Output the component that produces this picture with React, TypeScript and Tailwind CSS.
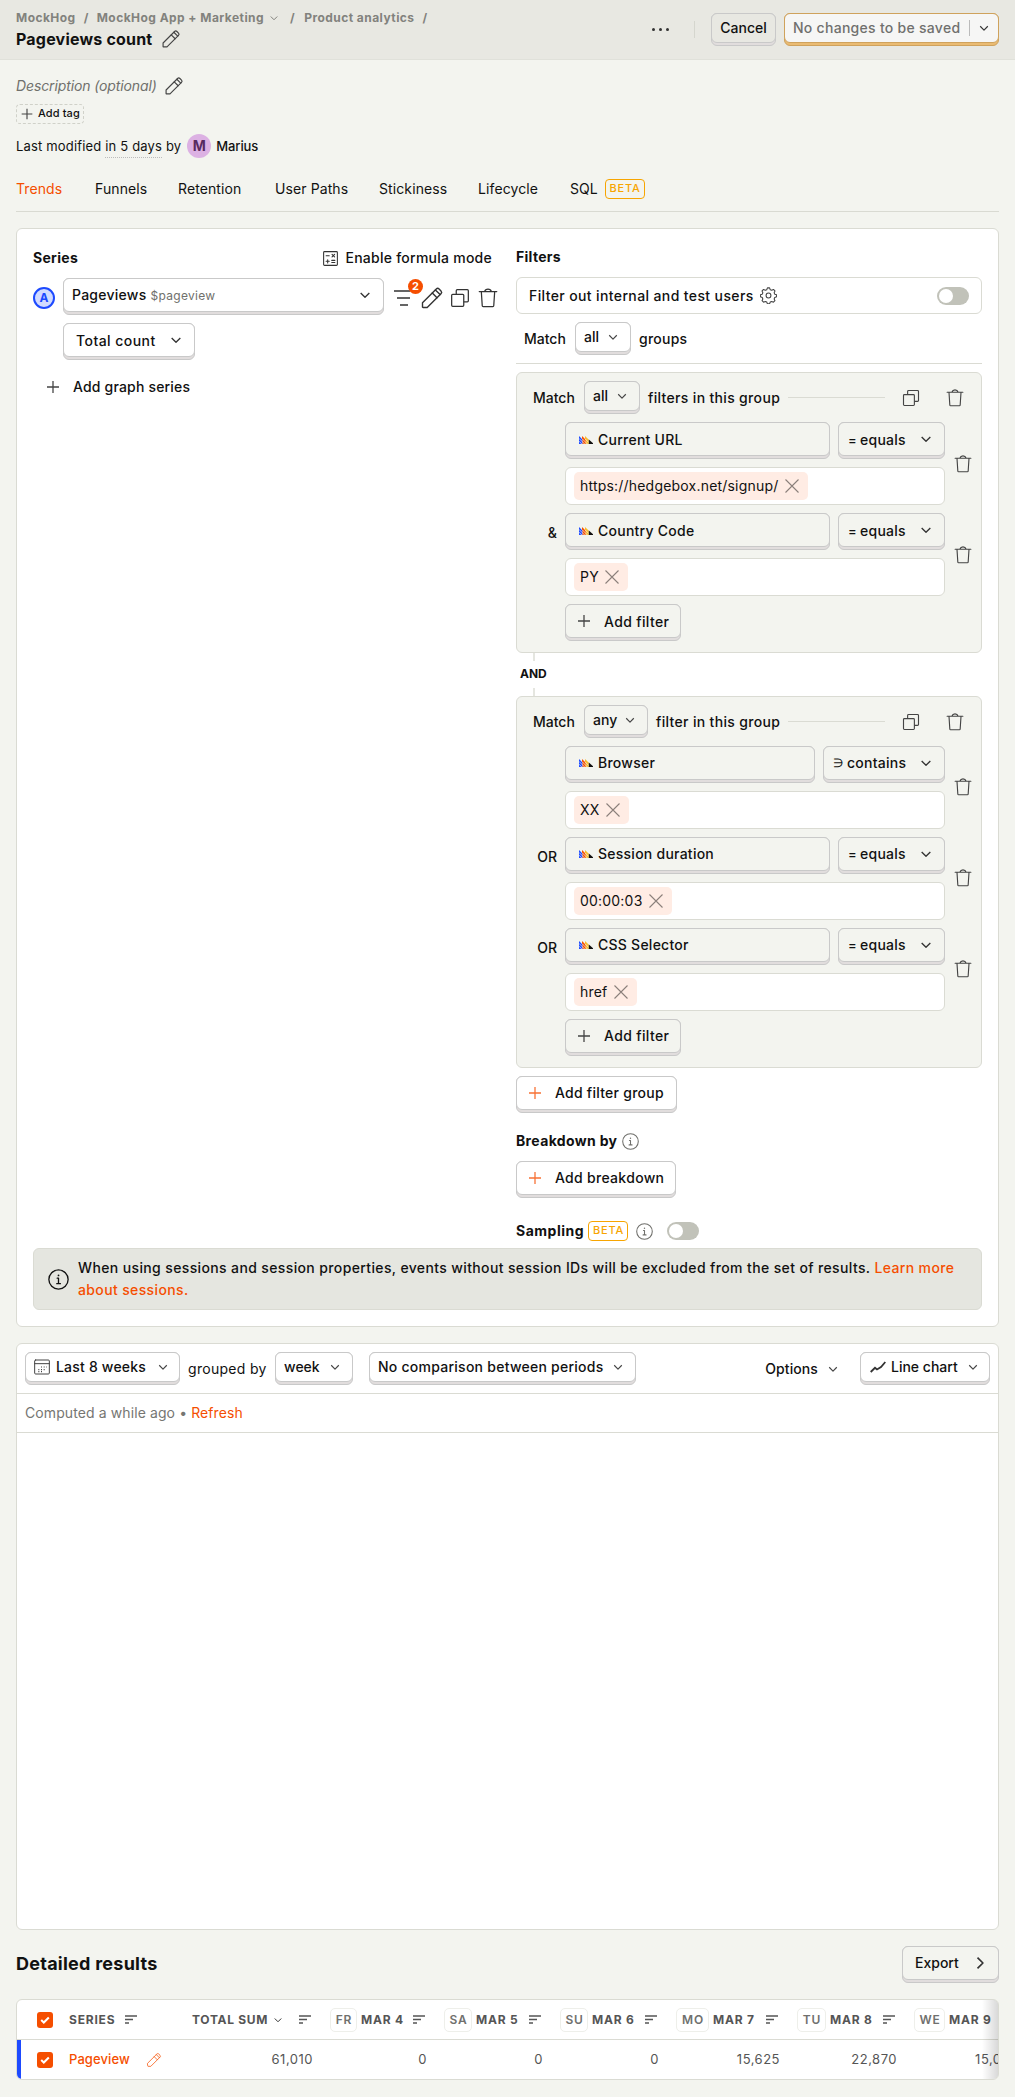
import React from "react";
import clsx from "clsx";

type IconProps = { className?: string };

const svgProps = {
  viewBox: "0 0 24 24",
  fill: "none",
  stroke: "currentColor",
  strokeWidth: 1.5,
  strokeLinecap: "round" as const,
  strokeLinejoin: "round" as const,
};

function Pencil({ className }: IconProps) {
  return (
    <svg {...svgProps} strokeWidth={1.4} className={clsx("shrink-0", className)}>
      <path d="M2.500 16.800 16.300 3a2 2 0 0 1 2.800 0l1.900 1.900a2 2 0 0 1 0 2.800L7.200 21.500H3.100a.6.6 0 0 1-.6-.6z" />
      <path d="m12.300 7 4.700 4.700M15.400 3.900l4.700 4.700" />
    </svg>
  );
}

function Plus({ className }: IconProps) {
  return (
    <svg {...svgProps} strokeWidth={1.7} className={clsx("shrink-0", className)}>
      <path d="M12 4v16M4 12h16" strokeLinecap="butt" />
    </svg>
  );
}

function Chevron({ className }: IconProps) {
  return (
    <svg {...svgProps} strokeWidth={2} className={clsx("shrink-0", className)}>
      <path d="m5.500 9 6.500 6.500L18.500 9" strokeLinecap="butt" />
    </svg>
  );
}

function Copy({ className }: IconProps) {
  return (
    <svg {...svgProps} className={clsx("shrink-0", className)}>
      <rect x="2" y="7.5" width="14.5" height="14.5" rx="1.2" />
      <path d="M7.5 7V3.2c0-.7.5-1.2 1.2-1.2h12.1c.7 0 1.2.5 1.2 1.2v12.1c0 .7-.5 1.2-1.2 1.2H17" />
    </svg>
  );
}

function Trash({ className }: IconProps) {
  return (
    <svg {...svgProps} className={clsx("shrink-0", className)}>
      <path d="M1.500 4.300h21M4 4.500l1.100 16.900c0 .6.5 1 1.100 1h11.600c.6 0 1.100-.4 1.100-1L20 4.500M8 4c.5-1.800 2-2.800 4-2.800s3.500 1 4 2.800" />
    </svg>
  );
}

function Info({ className }: IconProps) {
  return (
    <svg {...svgProps} className={clsx("shrink-0", className)}>
      <circle cx="12" cy="12" r="11" />
      <path d="M10.500 10.500H12v6M10 16.800h4.200" />
      <circle cx="12" cy="7.300" r="1" fill="currentColor" stroke="none" />
    </svg>
  );
}

function Gear({ className }: IconProps) {
  return (
    <svg {...svgProps} className={clsx("shrink-0", className)}>
      <circle cx="12" cy="12" r="3.4" />
      <path d="M10.500 1.200h3l1 2.600 2 .8 2.500-1.100 2.100 2.100-1.100 2.500.8 2 2.600 1v2.800l-2.600 1-.8 2 1.100 2.500-2.100 2.100-2.500-1.100-2 .8-1 2.600h-3l-1-2.600-2-.8-2.500 1.100-2.100-2.100 1.100-2.500-.8-2-2.600-1v-2.800l2.600-1 .8-2-1.100-2.500 2.100-2.100 2.500 1.100 2-.8z" />
    </svg>
  );
}

function Calculator({ className }: IconProps) {
  return (
    <svg {...svgProps} strokeWidth={1.7} className={clsx("shrink-0", className)}>
      <rect x="1" y="1" width="22" height="22" rx="1.500" />
      <path d="M5 7.500h5M14.500 5.500l4 4M18.500 5.500l-4 4M5 16.500h5M7.500 14v5M14 15h5M14 18.500h5" />
    </svg>
  );
}

function Calendar({ className }: IconProps) {
  return (
    <svg {...svgProps} className={clsx("shrink-0", className)}>
      <rect x="1" y="1.500" width="22" height="21" rx="1.500" />
      <path d="M1 7h22" />
      <path d="M10.500 12h1.500M14.500 12H16M18 12h1M6.500 16H8M10.500 16h1.500M14.500 16H16M6.500 19H8M10.500 19h1.500" strokeWidth={1.8} strokeLinecap="butt" />
    </svg>
  );
}

function Sort({ className }: IconProps) {
  return (
    <svg viewBox="0 0 12 9" className={clsx("h-[9px] w-3 shrink-0", className)} stroke="currentColor" strokeWidth={1.3}>
      <path d="M0 1h12M0 4.500h8M0 8h4" />
    </svg>
  );
}

function Logo() {
  return (
    <svg viewBox="0 0 14 8" className="h-2 w-3.5 shrink-0">
      <path d="M0 0 3.500 3.500V8H0z" fill="#1d4aff" />
      <path d="M3 0 6.800 3.800V8H3.500V3.500L3 3z" fill="#f54e00" />
      <path d="M6 0l3.800 3.800V8H6.800V3.800L6 3z" fill="#f9bd2b" />
      <path d="M0 2.400 5.600 8M0 5.200 2.800 8M3 2.600 8.400 8M6 2.800l3.800 3.800" stroke="#f3f4ef" strokeWidth={0.7} />
      <path d="m9.800 3.400 4.200 3.900V8H9.800z" fill="#111" />
    </svg>
  );
}

type BtnProps = {
  children: React.ReactNode;
  className?: string;
  face?: string;
  edge?: string;
  small?: boolean;
};

function Btn({ children, className, face = "bg-white border-[#c9c9c9]", edge = "bg-[#e1dddd] border-[#c9c9c9]", small }: BtnProps) {
  return (
    <button type="button" className={clsx("flex shrink-0 rounded-[6px] border pb-[2px]", small ? "h-[33px]" : "h-[37px]", edge, className)}>
      <span className={clsx("-mx-px -mt-px flex flex-1 items-center rounded-[6px] border font-medium whitespace-nowrap", small ? "h-[30px]" : "h-[34px]", face)}>
        {children}
      </span>
    </button>
  );
}

const gray = "bg-[#f3f4ef] border-[#c9c9c9]";

function Select({ label, className, face }: { label: string; className: string; face?: string }) {
  return (
    <Btn small className={className} face={face}>
      <span className="flex-1 pl-2 text-left">{label}</span>
      <Chevron className="mr-2.5 size-3.5 text-[#444]" />
    </Btn>
  );
}

function Toggle() {
  return (
    <span className="flex h-[18px] w-8 shrink-0 items-center rounded-full bg-[#c1c2b9] pl-[2px]">
      <span className="size-3.5 rounded-full bg-white" />
    </span>
  );
}

function Beta() {
  return (
    <span className="flex h-5 w-10 shrink-0 items-center justify-center rounded-[4px] border border-[#f7a501] pl-px text-[11px] font-medium tracking-[0.8px] text-[#f7a501]">
      BETA
    </span>
  );
}

type Prop = { name: string; value: string; op?: string; join?: string };

function FilterRow({ name, value, op = "equals", join, textClass }: Prop & { textClass?: string }) {
  const contains = op === "contains";
  return (
    <div className="flex h-[83px]">
      <div className="w-10 pt-[10px] text-right font-medium leading-[20px]">{join}</div>
      <div className="ml-2 flex w-[380px] flex-col gap-2">
        <div className="flex gap-2">
          <Btn className="flex-1" face={gray}>
            <span className={clsx("flex items-center gap-[5px] pl-[13px] tracking-[0.25px]", textClass)}>
              <Logo />
              {name}
            </span>
          </Btn>
          <Btn className={contains ? "w-[122px]" : "w-[107px]"} face={gray}>
            <span className={clsx("flex flex-1 items-center gap-1 pl-[9px] tracking-[0.25px]", textClass)}>
              <span className={contains ? "w-[10px] text-[12px] font-normal tracking-normal" : "w-[8px] text-[13px] tracking-normal"}>{contains ? "∋" : "="}</span>
              {op}
            </span>
            <Chevron className="mr-2.5 size-4 text-[#333]" />
          </Btn>
        </div>
        <div className="flex h-[38px] items-center rounded-[6px] border border-[#dadbd3] bg-white pl-2">
          <span className="flex h-7 items-center gap-[6.500px] rounded-[5px] bg-[#ffece4] pr-[9px] pl-1.5">
            <span className="tracking-[0.2px]">{value}</span>
            <svg viewBox="0 0 14 14" className="size-3.5" stroke="#8b7f7a" strokeWidth={1.1}>
              <path d="m.5.5 13 13M13.500.5l-13 13" />
            </svg>
          </span>
        </div>
      </div>
      <Trash className={clsx("mt-[32px] ml-[9px] size-[18px] text-[#444]", textClass)} />
    </div>
  );
}

type GroupProps = { match: string; text: string; rows: Prop[]; matchWidth: string; textClass?: string };

function FilterGroup({ match, text, rows, matchWidth, textClass }: GroupProps) {
  return (
    <div className="flex flex-col rounded-[6px] border border-[#dadbd3] bg-[#f3f4ef] pt-2 pb-[11px]">
      <div className="flex h-[33px] items-center pl-4 font-medium">
        <span className="w-[51px]">Match</span>
        <Select label={match} className={matchWidth} face={gray} />
        <span className="ml-2 whitespace-nowrap tracking-[0.33px]">{text}</span>
        <span className="ml-2 h-px flex-1 bg-[#dadbd3]" />
        <Copy className="ml-[17px] size-[18px] text-[#444]" />
        <Trash className="mr-[17px] ml-[26px] size-[18px] text-[#444]" />
      </div>
      <div className="mt-2 flex flex-col gap-2">
        {rows.map((r) => (
          <FilterRow key={r.name} {...r} textClass={textClass} />
        ))}
      </div>
      <Btn className="mt-2 ml-12 w-[116px]" face={gray}>
        <Plus className="ml-[9px] size-[18px] text-[#444]" />
        <span className={clsx("ml-[11px] tracking-[0.35px]", textClass)}>Add filter</span>
      </Btn>
    </div>
  );
}

function Check() {
  return (
    <span className="flex size-4 shrink-0 items-center justify-center rounded-[3px] bg-[#f54e00]">
      <svg viewBox="0 0 16 16" className="size-4" fill="none" stroke="#fff" strokeWidth={2}>
        <path d="m4.200 8 2.600 2.500 5-5" />
      </svg>
    </span>
  );
}

const days = [
  { d: "FR", m: "MAR 4", v: "0", w: "w-[114px]", b: "w-[27px]" },
  { d: "SA", m: "MAR 5", v: "0", w: "w-[116px]", b: "w-[28px]" },
  { d: "SU", m: "MAR 6", v: "0", w: "w-[116px]", b: "w-[28px]" },
  { d: "MO", m: "MAR 7", v: "15,625", w: "w-[121px]", b: "w-[33px]" },
  { d: "TU", m: "MAR 8", v: "22,870", w: "w-[117px]", b: "w-[29px]" },
  { d: "WE", m: "MAR 9", v: "15,041", w: "w-[119px]", b: "w-[31px]" },
];

const tabs = [
  { name: "Trends", w: "w-[79px]" },
  { name: "Funnels", w: "w-[83px]" },
  { name: "Retention", w: "w-[97px]" },
  { name: "User Paths", w: "w-[104px]" },
  { name: "Stickiness", w: "w-[99px]" },
  { name: "Lifecycle", w: "w-[92px]" },
];

export default function App() {
  return (
    <div className="h-[2097px] w-[1015px] overflow-hidden bg-[#f3f4ef] font-['Inter',sans-serif] text-sm text-[#111]">
      <header className="flex h-[60px] border-b border-[#e0e1da] bg-[#e8e8e2] pl-4">
        <div className="flex-1 pt-[10px]">
          <div className="flex h-4 items-center text-xs font-bold tracking-[0.45px] text-[#82827d]">
            <span>MockHog</span>
            <span className="mx-[8px]">/</span>
            <span>MockHog App + Marketing</span>
            <Chevron className="ml-1 size-3" />
            <span className="mr-[9px] ml-[10px]">/</span>
            <span>Product analytics</span>
            <span className="mx-[8px]">/</span>
          </div>
          <div className="mt-px flex h-6 items-center">
            <h1 className="text-base font-bold tracking-[0.2px]">Pageviews count</h1>
            <Pencil className="ml-[9px] size-5 text-[#444]" />
          </div>
        </div>
        <div className="flex pt-[13px] pr-4">
          <div className="flex h-[33px] items-center">
            <span className="flex w-[17px] justify-between">
              <i className="size-[3px] rounded-full bg-[#333]" />
              <i className="size-[3px] rounded-full bg-[#333]" />
              <i className="size-[3px] rounded-full bg-[#333]" />
            </span>
            <span className="mr-4 ml-[25px] h-[17px] w-px bg-[#d5d6ce]" />
          </div>
          <Btn small className="w-[65px]" face="bg-[#e8e8e2] border-[#c9c9c9]">
            <span className="flex-1 text-center">Cancel</span>
          </Btn>
          <Btn small className="ml-2 w-[215px]" face="bg-[#f6f6f5] border-[#cfa25c]" edge="bg-[#eabb72] border-[#cfa25c]">
            <span className="flex-1 pl-2 text-left tracking-[0.28px] text-[#70706e]">No changes to be saved</span>
            <span className="h-4 w-px bg-[#bbb]" />
            <Chevron className="mr-[7px] ml-[7px] size-3.5 text-[#333]" />
          </Btn>
        </div>
      </header>

      <main className="flex flex-col px-4">
        <div className="mt-4 flex h-5 items-center text-[#70706c]">
          <span className="tracking-[-0.12px] italic">Description (optional)</span>
          <Pencil className="ml-[7px] size-5 text-[#444]" />
        </div>
        <div className="mt-2 flex h-5 w-[68px] items-center rounded-[4px] border border-dashed border-[#d0d1c9] pl-[2px] text-[11px] font-medium">
          <Plus className="size-4 text-[#444]" />
          <span className="ml-[3px] whitespace-nowrap tracking-[0.1px]">Add tag</span>
        </div>
        <div className="mt-[10px] flex h-6 items-center text-[13px]">
          <span className="tracking-[0.17px]">
            Last modified <span className="border-b border-dotted border-[#bbb] pb-[3px]">in 5 days</span> by
          </span>
          <span className="ml-1.5 flex size-6 items-center justify-center rounded-full bg-[#dcb1e3] text-sm font-bold text-[#572b5f]">M</span>
          <span className="ml-[5px] font-medium tracking-[-0.1px]">Marius</span>
        </div>
        <nav className="mt-[9px] flex h-[45px] items-center border-b border-[#d9dad2]">
          {tabs.map((t, i) => (
            <span key={t.name} className={clsx("tracking-[0.1px]", t.w, i === 0 && "text-[#f54e00]")}>
              {t.name}
            </span>
          ))}
          <span className="flex items-center gap-[7px]">
            SQL <Beta />
          </span>
        </nav>

        <section className="mt-4 flex h-[1099px] flex-col rounded-[6px] border border-[#dadbd3] bg-white px-4">
          <div className="flex h-[1019px] gap-4">
            <div className="flex w-[467px] flex-col">
              <div className="mt-[19px] flex h-5 items-center">
                <h4 className="flex-1 font-bold tracking-[0.3px]">Series</h4>
                <Calculator className="size-[15px] text-[#333]" />
                <span className="mr-2 ml-[7px] font-medium tracking-[0.25px]">Enable formula mode</span>
              </div>
              <div className="mt-[10px] flex items-start">
                <span className="mt-[9px] flex size-[22px] items-center justify-center rounded-full border-2 border-[#1d4aff] bg-[#d2dbff] text-xs font-bold text-[#1d4aff]">A</span>
                <Btn className="ml-2 w-[321px]">
                  <span className="flex-1 pl-2 text-left tracking-[0.25px]">
                    Pageviews <span className="text-xs font-normal tracking-[0.3px] text-[#70706c]">$pageview</span>
                  </span>
                  <Chevron className="mr-2.5 size-4 text-[#333]" />
                </Btn>
                <div className="relative mt-[11px] ml-2 flex h-[18px] items-center text-[#333]">
                  <svg viewBox="0 0 20 18" className="h-[18px] w-5" stroke="currentColor" strokeWidth={1.6}>
                    <path d="M2 2h16M5 9h13M8 16h8" />
                  </svg>
                  <span className="absolute -top-[10px] left-[16px] flex size-[15px] items-center justify-center rounded-full bg-[#f54e00] text-[11px] font-bold text-white">2</span>
                  <Pencil className="ml-[8px] size-[24px]" />
                  <Copy className="ml-[6px] size-[20px]" />
                  <Trash className="ml-[8px] size-5" />
                </div>
              </div>
              <Btn className="mt-2 ml-[30px] w-[132px]">
                <span className="flex-1 pt-px pl-3 text-left tracking-[0.45px]">Total count</span>
                <Chevron className="mr-2.5 size-4 text-[#333]" />
              </Btn>
              <div className="mt-[17px] ml-[11px] flex h-5 items-center font-medium">
                <Plus className="size-[18px] text-[#444]" />
                <span className="ml-[11px] tracking-[0.18px]">Add graph series</span>
              </div>
            </div>

            <div className="flex w-[466px] flex-col">
              <h4 className="mt-[18px] h-5 font-bold leading-5 tracking-[0.3px]">Filters</h4>
              <div className="mt-[10px] flex h-[37px] items-center rounded-[6px] border border-[#dadbd3] px-3">
                <span className="font-medium tracking-[0.38px]">Filter out internal and test users</span>
                <Gear className="ml-[6px] size-[17px] text-[#444]" />
                <span className="flex-1" />
                <Toggle />
              </div>
              <div className="mt-2 flex h-[33px] items-center pl-2 font-medium">
                <span className="w-[51px]">Match</span>
                <Select label="all" className="w-14" />
                <span className="ml-2 tracking-[0.25px]">groups</span>
              </div>
              <div className="mt-2 mb-2 h-px bg-[#dadbd3]" />
              <FilterGroup
                match="all"
                matchWidth="w-14"
                text="filters in this group"
                textClass="translate-y-px"
                rows={[
                  { name: "Current URL", value: "https://hedgebox.net/signup/" },
                  { name: "Country Code", value: "PY", join: "&" },
                ]}
              />
              <div className="flex h-[43px] flex-col">
                <span className="ml-[17px] h-2 w-[2px] bg-[#e5e6e0]" />
                <span className="flex h-[27px] items-center pb-[2px] pl-1 text-xs font-bold">AND</span>
                <span className="ml-[17px] h-2 w-[2px] bg-[#e5e6e0]" />
              </div>
              <FilterGroup
                match="any"
                matchWidth="w-16"
                text="filter in this group"
                rows={[
                  { name: "Browser", value: "XX", op: "contains" },
                  { name: "Session duration", value: "00:00:03", join: "OR" },
                  { name: "CSS Selector", value: "href", join: "OR" },
                ]}
              />
              <Btn className="mt-2 w-[161px] self-start">
                <Plus className="ml-[9px] size-[18px] text-[#f54e00]/80" />
                <span className="ml-[11px] tracking-[0.25px]">Add filter group</span>
              </Btn>
              <div className="mt-[18px] flex h-5 items-center font-bold tracking-[0.35px]">
                Breakdown by
                <Info className="ml-[5px] size-[17px] text-[#70706c]" />
              </div>
              <Btn className="mt-[10px] w-[160px] self-start">
                <Plus className="ml-[9px] size-[18px] text-[#f54e00]/80" />
                <span className="ml-[11px] tracking-[0.3px]">Add breakdown</span>
              </Btn>
              <div className="mt-[23px] flex h-5 items-center font-bold">
                <span className="mr-1 tracking-[0.5px]">Sampling</span>
                <Beta />
                <Info className="mr-[14px] ml-2 size-[17px] text-[#70706c]" />
                <Toggle />
              </div>
            </div>
          </div>
          <div className="flex h-[62px] items-center rounded-[6px] border border-[#dadbd3] bg-[#e5e6e0] pr-5 pl-[14px]">
            <Info className="size-[21px] shrink-0" />
            <p className="ml-[9px] pb-px font-medium leading-[22px] tracking-[0.37px]">
              When using sessions and session properties, events without session IDs will be excluded from the set of results.{" "}
              <span className="text-[#f54e00]">Learn more about sessions.</span>
            </p>
          </div>
        </section>

        <section className="mt-4 flex h-[587px] flex-col rounded-[6px] border border-[#dadbd3] bg-white">
          <div className="flex h-[50px] items-center border-b border-[#dadbd3] px-2">
            <Btn small className="w-[155px]">
              <Calendar className="ml-2 size-4 text-[#444]" />
              <span className="flex-1 pl-1.5 text-left tracking-[0.2px]">Last 8 weeks</span>
              <Chevron className="mr-[9px] size-3.5 text-[#444]" />
            </Btn>
            <span className="mx-2 w-[79px] whitespace-nowrap tracking-[0.3px]">grouped by</span>
            <Select label="week" className="w-[78px]" />
            <Select label="No comparison between periods" className="ml-4 w-[267px] tracking-[0.25px]" />
            <span className="flex-1" />
            <span className="pt-px font-medium tracking-[0.1px]">Options</span>
            <Chevron className="mt-[1px] mr-5 ml-2 size-3.5 text-[#444]" />
            <Btn small className="w-[130px]">
              <svg viewBox="0 0 16 12" className="ml-[9px] h-3 w-4" fill="none" stroke="#333" strokeWidth={1.8}>
                <path d="M.7 11 5 6.800l2 1.700 4-2.500 4.300-5" />
              </svg>
              <span className="flex-1 pl-[5px] text-left">Line chart</span>
              <Chevron className="mr-[9px] size-3.5 text-[#444]" />
            </Btn>
          </div>
          <div className="flex h-[39px] items-center border-b border-[#dadbd3] px-2 text-[#767672]">
            <span className="tracking-[0.1px]">
              Computed a while ago • <span className="text-[#f54e00]">Refresh</span>
            </span>
          </div>
        </section>

        <div className="mt-4 flex h-[37px] items-center">
          <h2 className="flex-1 pb-[2px] text-lg font-bold tracking-[0.25px]">Detailed results</h2>
          <Btn className="w-[97px]" face={gray}>
            <span className="flex-1 pl-3 text-left">Export</span>
            <Chevron className="mr-2 size-5 -rotate-90 text-[#333]" />
          </Btn>
        </div>

        <section className="relative mt-4 flex h-[81px] flex-col overflow-hidden rounded-[6px] border border-[#dadbd3] bg-white text-[#555]">
          <div className="flex h-10 w-[1100px] items-center border-b border-[#dadbd3] text-xs font-bold tracking-[0.8px]">
            <div className="flex w-[175px] shrink-0 items-center pl-5">
              <Check />
              <span className="mr-[10px] ml-4">SERIES</span>
              <Sort />
            </div>
            <div className="flex w-[119px] shrink-0 items-center">
              <span className="whitespace-nowrap tracking-[0.7px]">TOTAL SUM</span>
              <Chevron className="ml-1 size-3 text-[#333]" />
              <Sort className="ml-auto" />
            </div>
            {days.map((d) => (
              <div key={d.d} className={clsx("flex shrink-0 items-center pl-[19px]", d.w)}>
                <span className={clsx("mr-1 flex h-6 shrink-0 items-center justify-center rounded-[5px] border border-[#eeefea] pl-px font-semibold text-[#70706e]", d.b)}>{d.d}</span>
                <span className="whitespace-nowrap">{d.m}</span>
                <Sort className="ml-auto" />
              </div>
            ))}
          </div>
          <div className="flex h-[39px] w-[1100px] items-center border-l-4 border-[#1d4aff] text-[13px] tracking-[0.5px]">
            <div className="flex w-[171px] shrink-0 items-center pl-4">
              <Check />
              <span className="ml-4 w-[77px] font-medium tracking-[0.1px] text-[#f54e00]">Pageview</span>
              <Pencil className="size-4 text-[#f54e00]/80" />
            </div>
            <div className="w-[121px] shrink-0 text-right">61,010</div>
            {days.map((d) => (
              <div key={d.d} className={clsx("shrink-0 text-right", d.w)}>
                {d.v}
              </div>
            ))}
          </div>
          <div className="absolute inset-y-0 right-0 w-4 bg-gradient-to-r from-transparent to-black/15" />
        </section>
      </main>
    </div>
  );
}
